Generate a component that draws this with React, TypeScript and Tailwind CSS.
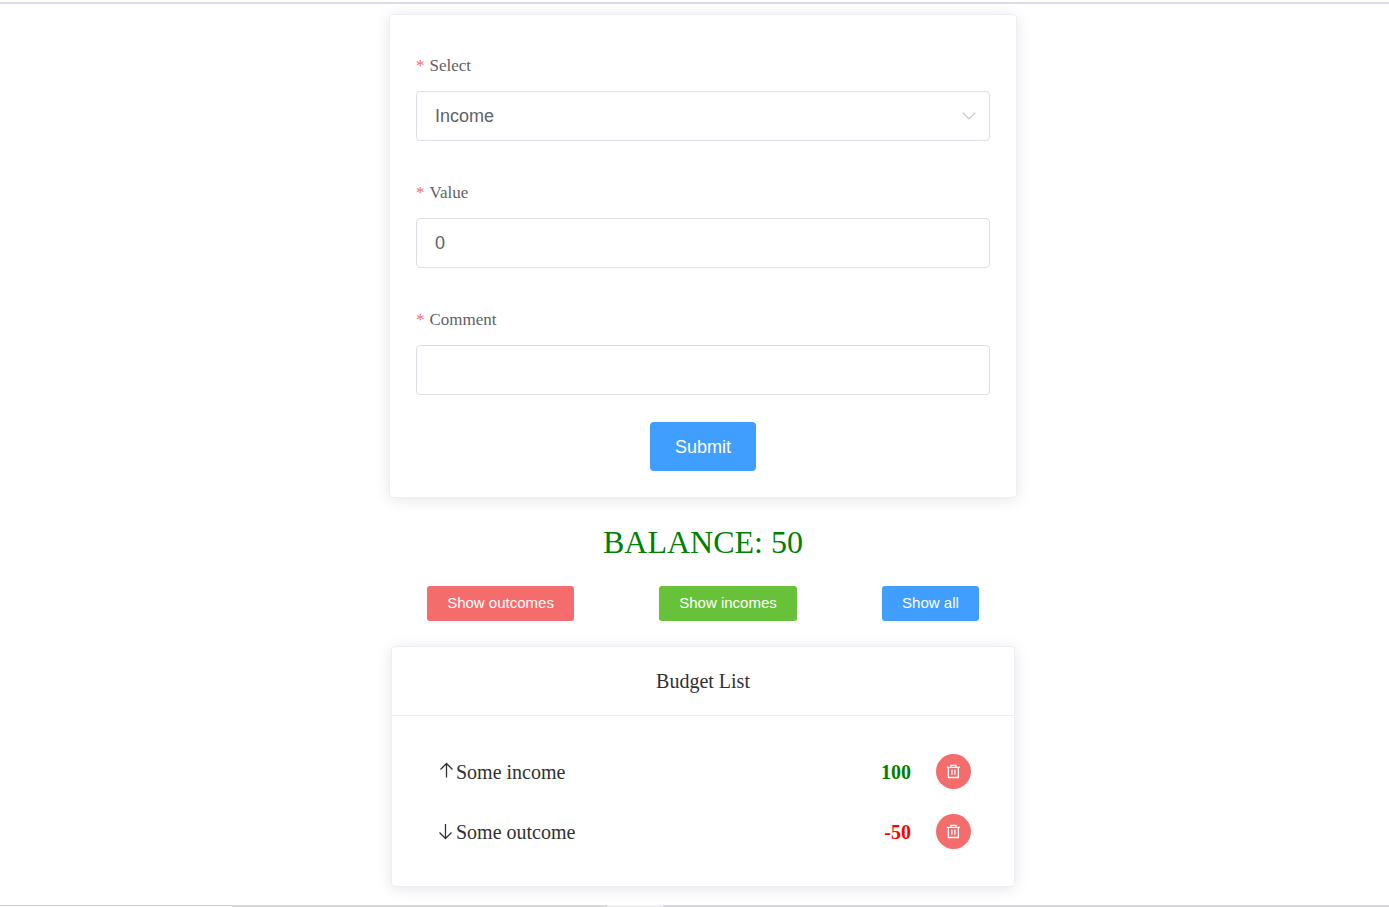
import { useState } from "react";
import type { ReactNode } from "react";

type Entry = { id: number; comment: string; value: number };

const initialEntries: Entry[] = [
  { id: 1, comment: "Some income", value: 100 },
  { id: 2, comment: "Some outcome", value: -50 },
];

const control =
  "block h-[50px] w-full appearance-none rounded border border-[#dcdfe6] bg-white px-[18px] font-['Liberation_Sans',Arial,sans-serif] text-lg text-[#606266] outline-none focus:border-[#409eff]";

const filterButton =
  "h-[35px] rounded-[3px] px-5 font-['Liberation_Sans',Arial,sans-serif] text-[15px] text-white";

function Field({ id, label, children }: { id: string; label: string; children: ReactNode }) {
  return (
    <div className="mb-[27px]">
      <label htmlFor={id} className="flex h-[50px] items-center gap-[5px] text-[17px] text-[#606266]">
        <span className="text-[#f56c6c]">*</span>
        {label}
      </label>
      {children}
    </div>
  );
}

function ArrowIcon({ up }: { up: boolean }) {
  return (
    <svg viewBox="0 0 20 20" className="size-5 shrink-0" fill="none" stroke="currentColor" strokeWidth="1.3" aria-hidden="true">
      {up ? <path d="M10.5 15.5V1.5M4.5 7.5l6-6 6 6" /> : <path d="M9.5 2v14.5M3.5 10.5l6 6 6-6" />}
    </svg>
  );
}

function TrashIcon() {
  return (
    <svg viewBox="0 0 15 15" className="size-[15px]" fill="none" stroke="currentColor" strokeWidth="1.3" aria-hidden="true">
      <path d="M0.8 3.4h13.2M5 3.4v-2h5v2M2.4 3.4v10.1h10V3.4M5.9 5.8v5M8.9 5.8v5" />
    </svg>
  );
}

export default function App() {
  const [entries, setEntries] = useState(initialEntries);
  const [filter, setFilter] = useState("all");
  const [type, setType] = useState("income");
  const [value, setValue] = useState("0");
  const [comment, setComment] = useState("");

  const balance = entries.reduce((sum, entry) => sum + entry.value, 0);
  const visible = entries.filter(
    (entry) => filter === "all" || (filter === "income" ? entry.value > 0 : entry.value < 0),
  );

  function submit() {
    const amount = Math.abs(Number(value));
    if (!amount || !comment) return;
    setEntries([...entries, { id: Date.now(), comment, value: type === "income" ? amount : -amount }]);
    setValue("0");
    setComment("");
  }

  return (
    <div className="flex min-h-screen flex-col bg-white pt-0.5 font-['Liberation_Serif','Times_New_Roman',serif] text-[#303133]">
      <div className="h-0.5 bg-[#dcdce4]" />
      <main className="flex flex-1 flex-col items-center pt-2.5 pb-[18px] pl-[17px]">
        <form
          onSubmit={(event) => {
            event.preventDefault();
            submit();
          }}
          className="w-full max-w-[628px] rounded border border-[#ebeef5] p-[26px] shadow-[0_2px_15px_0_rgba(0,0,0,0.1)]"
        >
          <Field id="type" label="Select">
            <div className="relative">
              <select id="type" value={type} onChange={(e) => setType(e.target.value)} className={control}>
                <option value="income">Income</option>
                <option value="outcome">Outcome</option>
              </select>
              <svg viewBox="0 0 14 8" className="pointer-events-none absolute top-[21px] right-[14px] h-2 w-3.5" fill="none" stroke="#c0c4cc" strokeWidth="1.2" aria-hidden="true">
                <path d="M0.7 0.7L7 7l6.3-6.3" />
              </svg>
            </div>
          </Field>
          <Field id="value" label="Value">
            <input id="value" inputMode="numeric" value={value} onChange={(e) => setValue(e.target.value)} className={control} />
          </Field>
          <Field id="comment" label="Comment">
            <input id="comment" value={comment} onChange={(e) => setComment(e.target.value)} className={control} />
          </Field>
          <div className="flex justify-center">
            <button type="submit" className="h-[49px] rounded bg-[#409eff] px-[25px] font-['Liberation_Sans',Arial,sans-serif] text-lg text-white">
              Submit
            </button>
          </div>
        </form>

        <div className="py-6 text-[32px] leading-10 text-[#008000]">BALANCE: {balance}</div>

        <div className="flex w-full max-w-[637px] justify-around">
          <button type="button" onClick={() => setFilter("outcome")} className={`${filterButton} bg-[#f56c6c]`}>
            Show outcomes
          </button>
          <button type="button" onClick={() => setFilter("income")} className={`${filterButton} bg-[#67c23a]`}>
            Show incomes
          </button>
          <button type="button" onClick={() => setFilter("all")} className={`${filterButton} bg-[#409eff]`}>
            Show all
          </button>
        </div>

        <section className="mt-[25px] w-full max-w-[624px] rounded border border-[#ebeef5] text-xl shadow-[0_2px_15px_0_rgba(0,0,0,0.1)]">
          <h2 className="border-b border-[#ebeef5] py-5 text-center">Budget List</h2>
          <ul className="flex flex-col gap-[25px] pt-[38px] pr-[43px] pb-[37px] pl-11">
            {visible.map((entry) => (
              <li key={entry.id} className="flex h-[35px] items-center">
                <ArrowIcon up={entry.value > 0} />
                <span>{entry.comment}</span>
                <span className={`mr-[25px] ml-auto font-bold ${entry.value > 0 ? "text-[#008000]" : "text-[#ff0000]"}`}>
                  {entry.value}
                </span>
                <button
                  type="button"
                  aria-label="Delete"
                  onClick={() => setEntries(entries.filter((item) => item.id !== entry.id))}
                  className="flex size-[35px] items-center justify-center rounded-full bg-[#f56c6c] text-white"
                >
                  <TrashIcon />
                </button>
              </li>
            ))}
          </ul>
        </section>
      </main>
      <div className="flex h-0.5">
        <div className="w-1/6 border-t border-[#cccccc]" />
        <div className="w-[27%] bg-[#d8d8d6]" />
        <div className="w-14 bg-[#f0f0f0]" />
        <div className="flex-1 bg-[#d6d8de]" />
      </div>
    </div>
  );
}
